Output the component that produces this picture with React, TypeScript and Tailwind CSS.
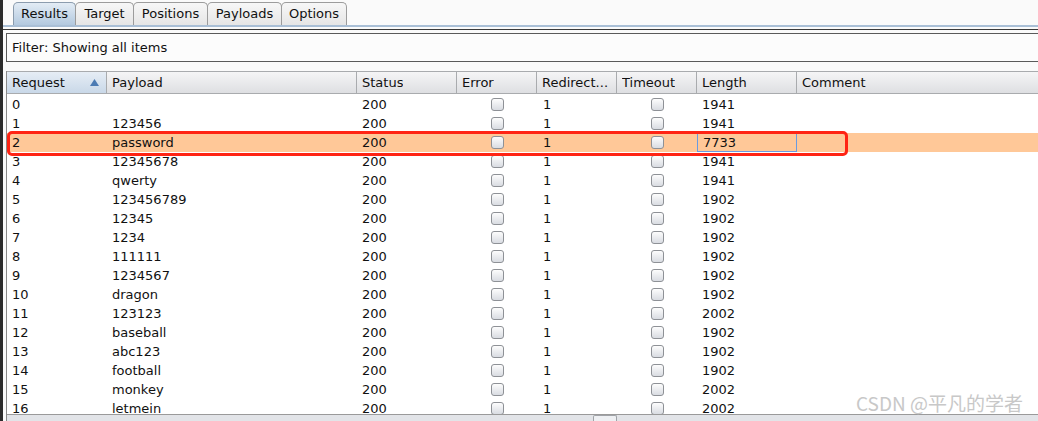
import React from 'react';

const rows: [string, string, string][] = [
  ['0', '', '1941'],
  ['1', '123456', '1941'],
  ['2', 'password', '7733'],
  ['3', '12345678', '1941'],
  ['4', 'qwerty', '1941'],
  ['5', '123456789', '1902'],
  ['6', '12345', '1902'],
  ['7', '1234', '1902'],
  ['8', '111111', '1902'],
  ['9', '1234567', '1902'],
  ['10', 'dragon', '1902'],
  ['11', '123123', '2002'],
  ['12', 'baseball', '1902'],
  ['13', 'abc123', '1902'],
  ['14', 'football', '1902'],
  ['15', 'monkey', '2002'],
  ['16', 'letmein', '2002'],
];

const tabs: [string, string][] = [
  ['Results', 'w-[63px]'],
  ['Target', 'w-[59px]'],
  ['Positions', 'w-[75px]'],
  ['Payloads', 'w-[75px]'],
  ['Options', 'w-[66px]'],
];

function Checkbox() {
  return (
    <div className="w-[13px] h-[13px] rounded-[3px] border border-[#8e9196] bg-gradient-to-b from-[#fdfdfd] to-[#d9dce2]" />
  );
}

function HeaderCell({ label, w, sorted }: { label: string; w: string; sorted?: boolean }) {
  return (
    <div
      className={`${w} h-full flex items-center justify-between pl-[5px] pr-[7px] border-r border-[#a9abae] ${
        sorted ? 'bg-gradient-to-b from-[#e6edf5] to-[#c9d8e8]' : ''
      }`}
    >
      <span className="truncate">{label}</span>
      {sorted && (
        <svg width="9" height="7" viewBox="0 0 9 7">
          <path d="M4.5 0 L9 7 L0 7 Z" fill="#4c7bb3" />
        </svg>
      )}
    </div>
  );
}

export default function App() {
  return (
    <div className="w-[1038px] h-[421px] flex overflow-hidden bg-[#fafafa] text-[13px] text-[#111] font-['DejaVu_Sans',sans-serif]">
      <div className="w-[3px] h-full bg-[#2b2b2b] shrink-0" />
      <div className="flex-1 flex flex-col min-w-0 relative">
        {/* tabs */}
        <div className="h-[25px] flex items-end pl-[10px] pt-[2px]">
          {tabs.map(([t, w], i) => (
            <div
              key={t}
              className={`${w} h-[23px] flex items-center justify-center border border-b-0 rounded-t-[5px] ${
                i === 0
                  ? 'bg-gradient-to-b from-[#e3ecf5] to-[#b3c9df] border-[#8b9cae]'
                  : 'bg-gradient-to-b from-[#f7f7f7] to-[#e6e6e6] border-[#9c9c9c] -ml-px'
              }`}
            >
              {t}
            </div>
          ))}
        </div>
        <div className="h-[2px] bg-[#a9bfd6]" />
        <div className="h-[2px]" />
        <div className="h-[1px] bg-[#3a3a3a]" />
        <div className="h-[3px]" />
        {/* filter */}
        <div className="ml-[3px] h-[29px] border border-[#5a5a5a] border-r-0 bg-[#fcfcfc] flex items-center pl-[5px]">
          Filter: Showing all items
        </div>
        <div className="h-[9px]" />
        {/* table */}
        <div className="ml-[3px] flex-1 flex flex-col border-l border-[#8a8a8a] bg-white min-h-0">
          <div className="h-[23px] flex border-t border-b border-[#a9abae] bg-gradient-to-b from-[#f5f5f6] to-[#dedfe2] shrink-0">
            <HeaderCell label="Request" w="w-[100px]" sorted />
            <HeaderCell label="Payload" w="w-[250px]" />
            <HeaderCell label="Status" w="w-[100px]" />
            <HeaderCell label="Error" w="w-[80px]" />
            <HeaderCell label="Redirect..." w="w-[80px]" />
            <HeaderCell label="Timeout" w="w-[80px]" />
            <HeaderCell label="Length" w="w-[100px]" />
            <div className="flex-1 flex items-center pl-[5px]">Comment</div>
          </div>
          <div className="flex-1 overflow-hidden relative pt-[1px]">
            {rows.map(([n, p, len]) => {
              const hl = n === '2';
              return (
                <div key={n} className={`h-[19px] flex items-center ${hl ? 'bg-[#ffc898]' : ''}`}>
                  <div className="w-[100px] pl-[5px]">{n}</div>
                  <div className="w-[250px] pl-[5px]">{p}</div>
                  <div className="w-[100px] pl-[5px]">200</div>
                  <div className="w-[80px] flex justify-center">
                    <Checkbox />
                  </div>
                  <div className="w-[80px] pl-[6px]">1</div>
                  <div className="w-[80px] flex justify-center">
                    <Checkbox />
                  </div>
                  <div
                    className={`w-[100px] h-full flex items-center pl-[5px] ${
                      hl ? 'border border-[#6a9be0] pl-[4px]' : ''
                    }`}
                  >
                    {len}
                  </div>
                  <div className="flex-1" />
                </div>
              );
            })}
            {/* annotation */}
            <div className="absolute left-0 top-[37px] w-[841px] h-[25px] border-[3px] border-[#ff2414] rounded-[5px]" />
          </div>
          {/* horizontal scrollbar */}
          <div className="h-[7px] shrink-0 border-t border-[#9a9a9a] bg-[#e2e4e8] flex">
            <div className="ml-[586px] w-[24px] h-full border border-[#a0a3a8] border-b-0 rounded-t-[2px] bg-[#eef0f3]" />
          </div>
        </div>
        {/* watermark */}
        <div className="absolute right-[15px] bottom-[9px] text-[19px] text-[#c8c8c8] font-['Noto_Sans_CJK_SC',sans-serif] leading-none">
          CSDN @平凡的学者
        </div>
      </div>
    </div>
  );
}
